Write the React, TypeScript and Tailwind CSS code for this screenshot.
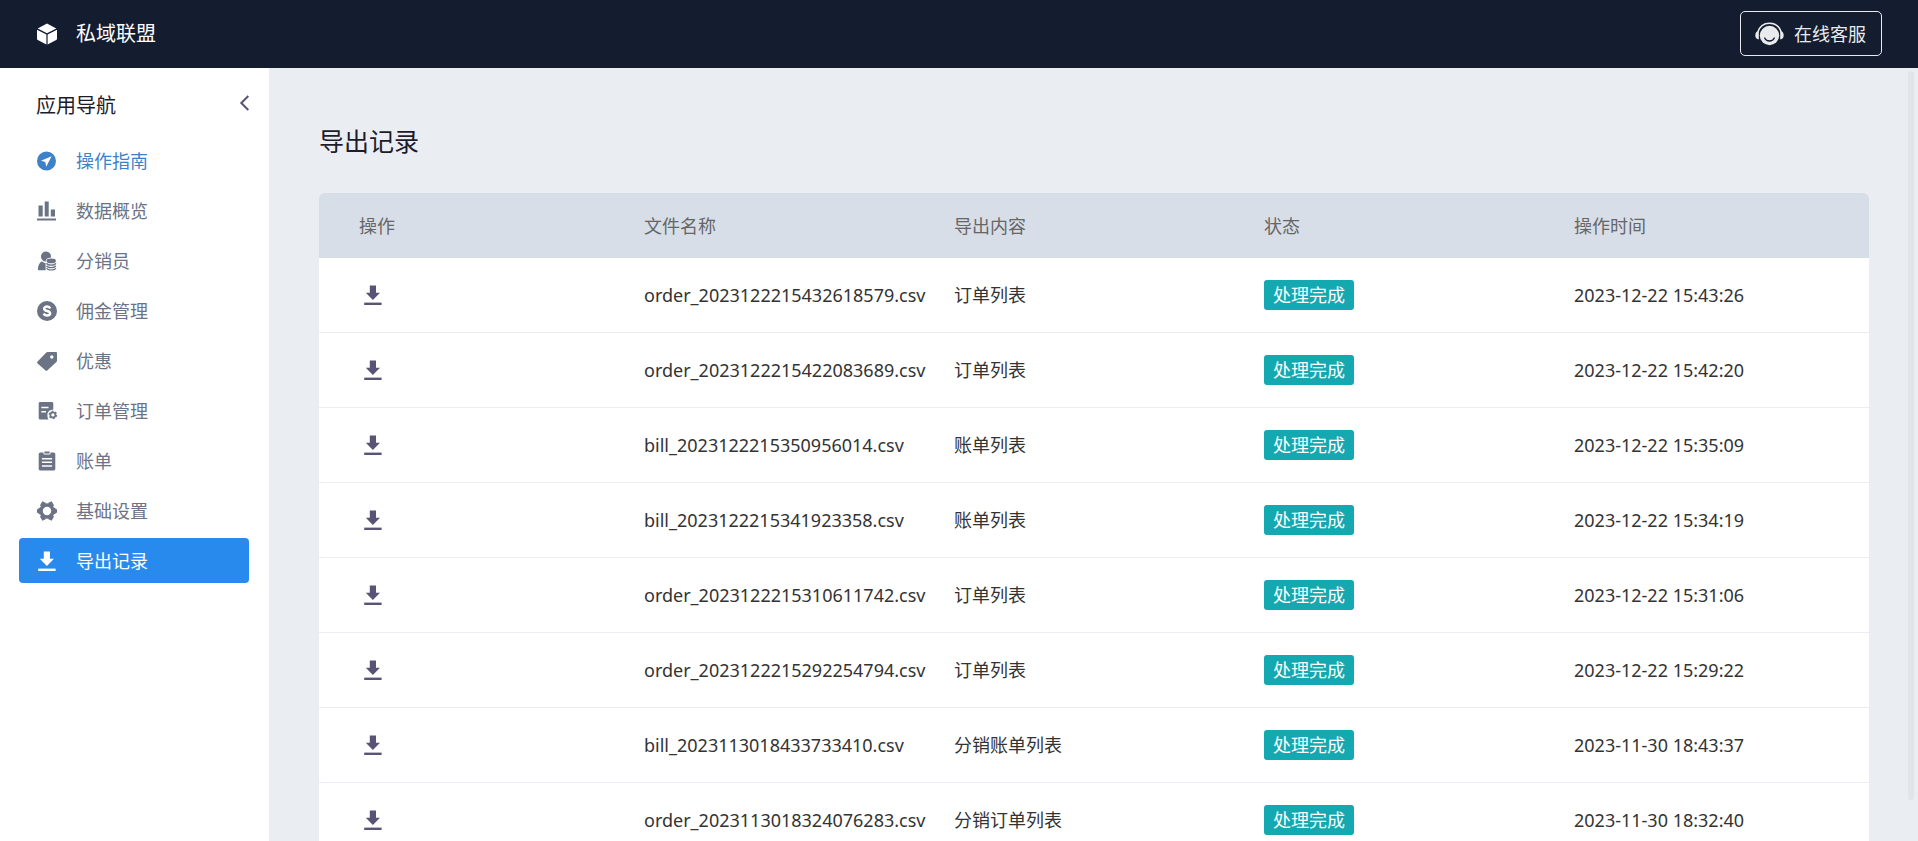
import type { ReactNode } from "react";

interface NavItem {
  label: string;
  icon: ReactNode;
  tone?: "link" | "active";
}

interface ExportRecord {
  file: string;
  content: string;
  time: string;
}

function Icon({ children, className = "size-5" }: { children: ReactNode; className?: string }) {
  return (
    <svg viewBox="0 0 20 20" fill="currentColor" aria-hidden="true" className={`${className} shrink-0`}>
      {children}
    </svg>
  );
}

function DownloadIcon({ className }: { className?: string }) {
  return (
    <Icon className={className}>
      <path d="M6.8 0.500h6.200v7.300h4L9.900 14.900 2.800 7.800h4z" />
      <path d="M1.200 17.600h17.400v2.400H1.200z" />
    </Icon>
  );
}

const navItems: NavItem[] = [
  {
    label: "操作指南",
    tone: "link",
    icon: (
      <Icon>
        <path
          fillRule="evenodd"
          d="M9.5 0.5a9.5 9.5 0 1 1 0 19 9.5 9.5 0 0 1 0-19zM14.6 5.2 4 9.8l4.3 1.3.9 4.6z"
        />
      </Icon>
    ),
  },
  {
    label: "数据概览",
    icon: (
      <Icon>
        <path d="M1.5 4.5h4.2v11H1.5zM7.7 0.5h4v15h-4zM13.8 8.5H18v7h-4.2zM0 17.5h19v2H0z" />
      </Icon>
    ),
  },
  {
    label: "分销员",
    icon: (
      <Icon>
        <path d="M9 0.500a5 5 0 0 1 4.900 6c-3 .3-5.100 1.500-5.100 3.200v.8A5 5 0 0 1 9 0.500z" />
        <path d="M4.900 10.200c1 1 2.200 1.600 3.700 1.700v7.300H2c-.8 0-1.200-.5-1.100-1.300.2-3.800 1.600-6.300 4-7.700z" />
        <ellipse cx="14.200" cy="9.900" rx="4.700" ry="2.400" />
        <path
          d="M9.600 12.300c.9 2.500 8.300 2.500 9.200 0M9.600 14.700c.9 2.500 8.300 2.500 9.200 0M9.600 17.100c.9 2.500 8.300 2.500 9.200 0"
          fill="none"
          stroke="currentColor"
          strokeWidth="1.200"
        />
      </Icon>
    ),
  },
  {
    label: "佣金管理",
    icon: (
      <Icon>
        <circle cx="10" cy="10" r="10" />
        <path
          d="M13.200 7.400C12.600 6.100 11.500 5.600 10.100 5.600c-1.700 0-2.900.8-2.900 2.100 0 3 5.900 1.600 5.900 4.600 0 1.400-1.300 2.200-3 2.200-1.500 0-2.800-.6-3.400-2"
          fill="none"
          stroke="#fff"
          strokeWidth="2.500"
        />
      </Icon>
    ),
  },
  {
    label: "优惠",
    icon: (
      <Icon>
        <path
          fillRule="evenodd"
          d="M10.700 1h8c.8 0 1.300.5 1.300 1.300v7.200c0 .6-.2 1-.6 1.400l-8.900 8.400c-.8.700-1.500.7-2.200 0L.6 12.500c-.7-.7-.7-1.400 0-2.100L9.300 1.600c.4-.4.8-.6 1.400-.6zm4.100 3.300a1.700 1.700 0 1 0 0 3.400 1.700 1.700 0 0 0 0-3.400z"
        />
      </Icon>
    ),
  },
  {
    label: "订单管理",
    icon: (
      <Icon>
        <path
          fillRule="evenodd"
          d="M3.200 1h11.600c.9 0 1.500.6 1.500 1.500v6c-3.500.1-5.900 2.400-5.900 5.400 0 1.800.3 3.200 1.100 4.700H3.200c-.9 0-1.500-.6-1.500-1.500V2.500C1.700 1.600 2.300 1 3.200 1zm1.100 4.700v1.600h7.200V5.700zm0 4.200v1.600h4.700V9.900z"
        />
        <circle cx="15.900" cy="13.900" r="2.500" fill="none" stroke="currentColor" strokeWidth="1.700" />
        <circle
          cx="15.900"
          cy="13.900"
          r="3.700"
          fill="none"
          stroke="currentColor"
          strokeWidth="1.200"
          strokeDasharray="1.940 1.940"
        />
      </Icon>
    ),
  },
  {
    label: "账单",
    icon: (
      <Icon>
        <path
          fillRule="evenodd"
          d="M3.500 1.500h2.900v.6c0 1 .6 1.500 1.500 1.500h4.200c.9 0 1.500-.5 1.500-1.500v-.6h2.900c1.100 0 1.800.7 1.800 1.800v14.400c0 1.100-.7 1.800-1.800 1.800h-13c-1.100 0-1.800-.7-1.800-1.800V3.300c0-1.100.7-1.800 1.800-1.800zM4.900 7v1.500h10.200V7zm0 3.600v1.500h10.200v-1.500zm0 3.600v1.500h10.200v-1.500z"
        />
        <rect x="7.300" y="0.400" width="5.400" height="2.200" rx="0.700" />
      </Icon>
    ),
  },
  {
    label: "基础设置",
    icon: (
      <Icon>
        <circle cx="10" cy="10" r="6" fill="none" stroke="currentColor" strokeWidth="3.600" />
        <path d="M5.400 0.300l3.700 1.700-3.800 3.900-2.400-1.400zM14.600 0.300l-3.700 1.700 3.800 3.900 2.400-1.400zM5.400 19.700l3.700-1.700-3.800-3.900-2.400 1.400zM14.600 19.700l-3.700-1.700 3.800-3.900 2.400 1.400zM0 8.600l3-2.200v7.200l-3-2.200zM20 8.600l-3-2.200v7.200l3-2.200z" />
      </Icon>
    ),
  },
  { label: "导出记录", tone: "active", icon: <DownloadIcon /> },
];

const columns = ["操作", "文件名称", "导出内容", "状态", "操作时间"];

const records: ExportRecord[] = [
  { file: "order_2023122215432618579.csv", content: "订单列表", time: "2023-12-22 15:43:26" },
  { file: "order_2023122215422083689.csv", content: "订单列表", time: "2023-12-22 15:42:20" },
  { file: "bill_2023122215350956014.csv", content: "账单列表", time: "2023-12-22 15:35:09" },
  { file: "bill_2023122215341923358.csv", content: "账单列表", time: "2023-12-22 15:34:19" },
  { file: "order_2023122215310611742.csv", content: "订单列表", time: "2023-12-22 15:31:06" },
  { file: "order_2023122215292254794.csv", content: "订单列表", time: "2023-12-22 15:29:22" },
  { file: "bill_2023113018433733410.csv", content: "分销账单列表", time: "2023-11-30 18:43:37" },
  { file: "order_2023113018324076283.csv", content: "分销订单列表", time: "2023-11-30 18:32:40" },
];

const navTones = {
  default: "text-[#6b7385]",
  link: "text-[#3d82c8]",
  active: "bg-[#298aee] text-white",
};

function Header() {
  return (
    <header className="flex h-[68px] shrink-0 items-center justify-between bg-[#141c30] pr-9 pb-px pl-[37px] text-white">
      <div className="flex items-center gap-[19px]">
        <svg viewBox="0 0 20 22" fill="currentColor" aria-hidden="true" className="h-[22px] w-5 shrink-0">
          <path d="M10 0.500l9.300 5L10 10.300 0.700 5.500zM0 6.700l9.400 4.900v10L0.800 17Q0 16.600 0 15.700zM20 6.700l-9.400 4.900v10l8.600-4.600q.8-.4.8-1.300z" />
        </svg>
        <span className="text-xl leading-7">私域联盟</span>
      </div>

      <button
        type="button"
        className="flex h-[45px] items-center gap-[10px] rounded-[5px] border border-[#e9eaec] pr-[15px] pl-[14px] text-lg leading-6 text-[#e9eaec]"
      >
        <svg viewBox="0 0 29 24" fill="currentColor" aria-hidden="true" className="h-6 w-[29px]">
          <circle cx="14.500" cy="13.500" r="9.700" />
          <path
            d="M2.600 10.500C4.600 4 9.200 1.200 14.500 1.200S24.400 4 26.400 10.500"
            fill="none"
            stroke="currentColor"
            strokeWidth="1.600"
          />
          <path d="M3.800 9v8.500C1.500 17.200.3 15.700.3 13.300S1.500 9.300 3.800 9zM25.200 9v8.500c2.300-.3 3.500-1.800 3.500-4.200S27.500 9.300 25.200 9z" />
          <path d="M9.700 16c1.800 4 7.800 4 9.600 0" fill="none" stroke="#141c30" strokeWidth="1.300" strokeLinecap="round" />
        </svg>
        在线客服
      </button>
    </header>
  );
}

function Sidebar() {
  return (
    <aside className="w-[269px] shrink-0 bg-white pt-4 pr-5 pl-[19px]">
      <div className="mb-[10px] flex h-11 items-center justify-between pl-[17px]">
        <h2 className="text-xl leading-7 text-[#1e1c2b]">应用导航</h2>
        <button type="button" aria-label="收起导航" className="flex h-[38px] items-start pt-2 text-[#595375]">
          <svg viewBox="0 0 10 16" fill="none" stroke="currentColor" strokeWidth="2" className="h-4 w-[10px]">
            <path d="M9.300 1L2.300 8l7 7" />
          </svg>
        </button>
      </div>

      <nav className="flex flex-col gap-[5px]">
        {navItems.map(({ label, icon, tone = "default" }) => (
          <a
            key={label}
            href="#"
            aria-current={tone === "active" ? "page" : undefined}
            className={`flex h-[45px] items-center gap-[19px] rounded px-[18px] text-lg leading-6 ${navTones[tone]}`}
          >
            {icon}
            {label}
          </a>
        ))}
      </nav>
    </aside>
  );
}

function RecordsTable() {
  return (
    <table className="w-full table-fixed border-separate border-spacing-0 text-left text-lg leading-6">
      <thead>
        <tr className="h-[65px] bg-[#d8dee8] text-[#666]">
          {columns.map((column) => (
            <th key={column} className="px-[15px] font-normal first:pl-10">
              {column}
            </th>
          ))}
        </tr>
      </thead>
      <tbody className="bg-white text-[#333]">
        {records.map(({ file, content, time }) => (
          <tr key={file} className="h-[75px] *:border-b *:border-[#ebedf2]">
            <td className="pl-10">
              <button type="button" aria-label={`下载 ${file}`} className="block p-1 text-[#595375]">
                <DownloadIcon className="size-5" />
              </button>
            </td>
            <td className="px-[15px] whitespace-nowrap">{file}</td>
            <td className="px-[15px]">{content}</td>
            <td className="px-[15px]">
              <span className="inline-flex h-[30px] items-center rounded-[3px] bg-[#14a9b0] px-[9px] align-middle text-white">
                处理完成
              </span>
            </td>
            <td className="px-[15px] whitespace-nowrap">{time}</td>
          </tr>
        ))}
      </tbody>
    </table>
  );
}

export default function App() {
  return (
    <div className="flex h-screen flex-col bg-[#eaedf2] font-['Noto_Sans','Noto_Sans_CJK_SC',sans-serif]">
      <Header />
      <div className="relative flex min-h-0 flex-1">
        <Sidebar />
        <main className="min-w-0 flex-1 overflow-y-auto pt-[55px] pr-[49px] pl-[50px] [scrollbar-width:none]">
          <h1 className="mb-[33px] text-[25px] leading-[37px] text-[#1e1c2b]">导出记录</h1>
          <div className="overflow-hidden rounded-t-md">
            <RecordsTable />
          </div>
        </main>
        <div className="absolute top-[3px] right-1 bottom-[41px] w-[6px] rounded-full bg-[#e1e5ea]" />
      </div>
    </div>
  );
}
